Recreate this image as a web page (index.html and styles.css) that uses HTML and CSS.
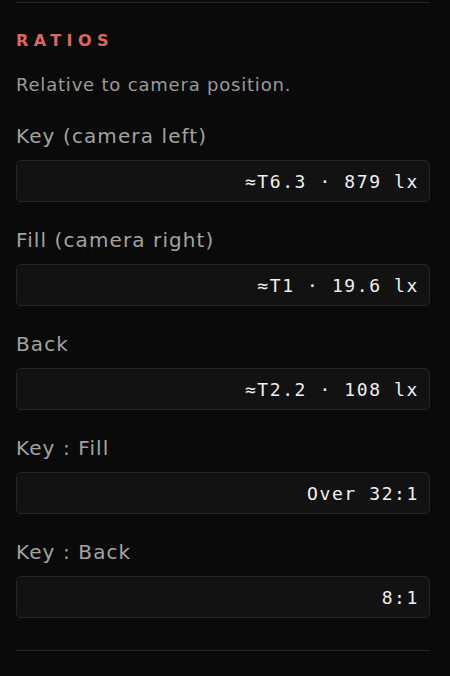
FILE: index.html
```html
<!DOCTYPE html>
<html lang="en">
<head>
<meta charset="utf-8">
<title>Ratios</title>
<link rel="stylesheet" href="styles.css">
</head>
<body>
<section class="panel">
  <div class="divider"></div>
  <h2 class="title">RATIOS</h2>
  <p class="desc">Relative to camera position.</p>
  <div class="fields">
    <div class="field">
      <div class="label">Key (camera left)</div>
      <div class="value">≈T6.3 · 879 lx</div>
    </div>
    <div class="field">
      <div class="label">Fill (camera right)</div>
      <div class="value">≈T1 · 19.6 lx</div>
    </div>
    <div class="field">
      <div class="label">Back</div>
      <div class="value">≈T2.2 · 108 lx</div>
    </div>
    <div class="field">
      <div class="label">Key : Fill</div>
      <div class="value">Over 32:1</div>
    </div>
    <div class="field">
      <div class="label">Key : Back</div>
      <div class="value">8:1</div>
    </div>
  </div>
  <div class="divider"></div>
</section>
</body>
</html>
```
FILE: styles.css
```css
html, body {
  margin: 0;
  padding: 0;
  background: #0a0a0a;
  height: 100%;
}
.panel {
  padding: 2px 20px 0 16px;
  display: flex;
  flex-direction: column;
  font-family: "DejaVu Sans", "Noto Sans", sans-serif;
}
.divider {
  height: 1px;
  background: #262626;
}
.title {
  margin: 28px 0 0;
  font-size: 16px;
  line-height: 20px;
  font-weight: 700;
  letter-spacing: 5.4px;
  color: #d96862;
}
.desc {
  margin: 22px 0 27px;
  font-size: 18px;
  line-height: 24px;
  letter-spacing: 0.8px;
  color: #9a9a9a;
}
.fields {
  display: flex;
  flex-direction: column;
  gap: 26px;
  margin-bottom: 32px;
}
.field {
  display: flex;
  flex-direction: column;
  gap: 12px;
}
.label {
  font-size: 20px;
  line-height: 24px;
  letter-spacing: 1.1px;
  color: #a3a3a3;
}
.value {
  height: 40px;
  box-sizing: content-box;
  border: 1px solid #262626;
  border-radius: 5px;
  background: #121212;
  padding: 0 10px 0 12px;
  display: flex;
  align-items: center;
  justify-content: flex-end;
  font-family: "DejaVu Sans Mono", "Liberation Mono", monospace;
  font-size: 18px;
  letter-spacing: 1.6px;
  color: #f0f0f0;
}
```
